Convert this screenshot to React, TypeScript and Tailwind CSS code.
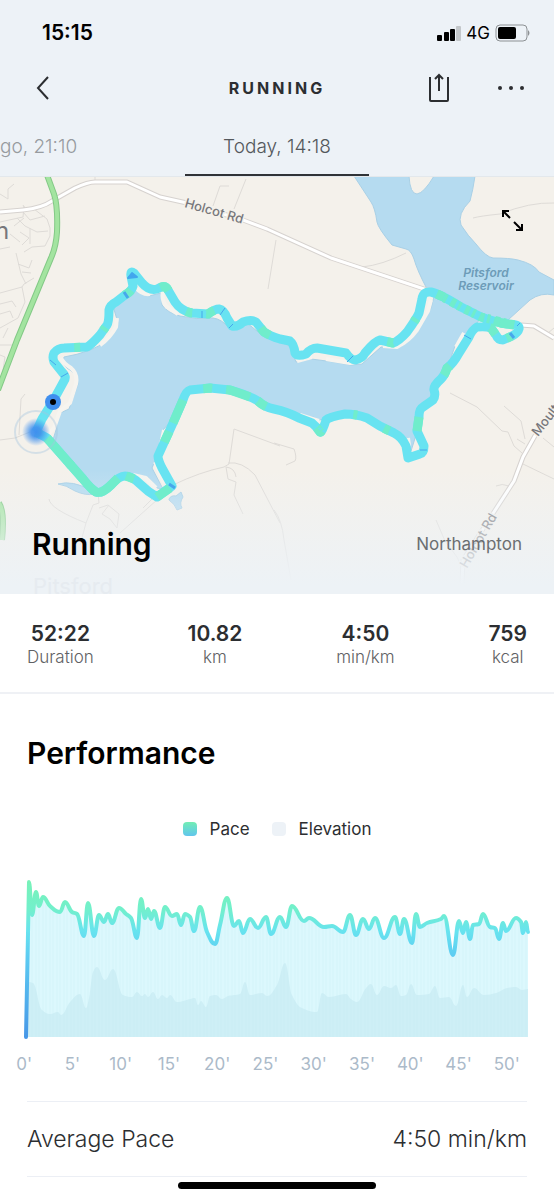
type Point = [number, number];

const stats = [
  { value: '52:22', label: 'Duration' },
  { value: '10.82', label: 'km' },
  { value: '4:50', label: 'min/km' },
  { value: '759', label: 'kcal' },
];

const minutes = [0, 5, 10, 15, 20, 25, 30, 35, 40, 45, 50];

const pace: Point[] = [
  [29, 882], [32, 915], [36, 892], [39, 906], [43, 897], [50, 906], [60, 912], [65, 902], [72, 912], [77, 914],
  [84, 936], [88, 903], [94, 936], [99, 915], [104, 922], [108, 914], [112, 923], [119, 908], [126, 914], [131, 918],
  [137, 938], [141, 899], [145, 918], [148, 909], [151, 919], [154, 911], [160, 928], [165, 907], [172, 916], [177, 914],
  [181, 925], [185, 914], [190, 917], [194, 931], [200, 907], [207, 932], [215, 944], [220, 925], [227, 898], [234, 926],
  [239, 921], [243, 933], [250, 919], [258, 928], [266, 917], [271, 934], [280, 917], [286, 927], [292, 906], [304, 921],
  [309, 918], [324, 927], [332, 926], [343, 932], [350, 915], [356, 935], [363, 919], [369, 929], [375, 918], [384, 938],
  [395, 917], [400, 934], [404, 919], [412, 943], [416, 914], [420, 927], [427, 923], [441, 919], [444, 916], [453, 955],
  [459, 921], [463, 933], [466, 922], [470, 939], [473, 925], [479, 924], [483, 914], [490, 927], [495, 928], [499, 939],
  [503, 923], [506, 931], [516, 918], [521, 922], [523, 933], [526, 922], [528, 932],
];

const elevation: Point[] = [
  [28, 982], [33, 983], [42, 1010], [50, 1014], [58, 1012], [61, 1015], [70, 1002], [80, 994], [86, 1008], [89, 998],
  [93, 972], [97, 967], [105, 980], [113, 969], [123, 995], [132, 997], [137, 992], [142, 996], [145, 994], [148, 997],
  [153, 992], [158, 999], [162, 995], [167, 998], [170, 995], [177, 1002], [190, 999], [195, 998], [198, 1005], [201, 1001],
  [206, 1007], [210, 996], [216, 995], [222, 999], [228, 996], [240, 994], [245, 982], [250, 995], [262, 993], [267, 996],
  [277, 985], [285, 963], [292, 995], [302, 1008], [317, 1012], [322, 993], [329, 997], [346, 994], [351, 999], [357, 1002],
  [366, 988], [371, 984], [377, 995], [384, 986], [391, 988], [396, 985], [401, 996], [406, 995], [411, 984], [417, 995],
  [429, 994], [435, 986], [440, 998], [449, 997], [456, 1006], [463, 985], [467, 997], [474, 988], [484, 995], [496, 993],
  [507, 988], [516, 987], [522, 990], [528, 989],
];

// Cubic curve through the points, flat at every peak and dip
function curve(points: Point[]) {
  const slopes = points.map(([x, y], i) => {
    if (i === 0 || i === points.length - 1) return 0;
    const left = (y - points[i - 1][1]) / (x - points[i - 1][0]);
    const right = (points[i + 1][1] - y) / (points[i + 1][0] - x);
    return left * right <= 0 ? 0 : (2 * left * right) / (left + right);
  });
  return points
    .map(([x, y], i) => {
      if (i === 0) return `${x} ${y}`;
      const [px, py] = points[i - 1];
      const d = (x - px) / 2.4;
      return `C${px + d} ${py + slopes[i - 1] * d} ${x - d} ${y - slopes[i] * d} ${x} ${y}`;
    })
    .join(' ');
}

const route =
  'M36 432 L42 419 L52 403 L64 381 Q67 377 62 372 L54 362 Q52 357 54 353 Q58 348 64 348 L87 347 Q91 345 100 335 L107 325 Q109 322 109 310 Q110 305 116 302 L125 295 Q132 291 133 286 L131 276 Q130 270 134 273 L142 283 Q149 291 157 289 Q165 284 168 290 L175 302 Q181 311 192 313 L208 314 Q215 309 219 309 Q224 310 227 318 L232 326 Q238 327 243 322 Q251 319 256 322 L264 332 Q270 336 280 339 L290 341 Q294 344 295 353 Q297 357 306 354 Q311 348 317 348 L346 353 Q351 360 355 360 Q362 359 365 353 Q375 341 380 340 L393 343 Q399 341 407 332 Q417 318 419 313 L422 299 Q423 291 431 292 Q440 294 461 307 L481 317 Q495 322 507 324 Q520 324 519 329 Q518 333 512 336 L503 340 Q498 340 496 335 L491 328 Q486 326 477 327 Q472 330 469 337 L459 353 Q453 364 447 368 Q445 375 441 379 Q433 386 434 390 Q436 396 433 400 L423 407 Q419 409 419 417 L417 431 L424 446 Q424 453 420 454 L408 458 Q407 452 406 446 Q402 437 394 433 Q380 427 367 418 Q356 414 345 414 Q329 417 326 420 Q322 433 320 432 Q317 427 312 423 L299 418 Q288 412 274 409 Q264 407 258 401 Q248 395 230 390 L210 388 L190 390 Q186 391 183 400 L173 423 L158 456 Q158 460 162 468 L172 486 L157 497 Q148 492 140 484 Q132 476 125 476 Q119 476 111 485 Q102 494 96 492 Q91 489 83 479 L47 438 L36 432';

const water = [
  'M137 287 Q142 295 149 296 L161 293 Q163 297 162 305 Q168 313 180 316 Q196 320 213 318 Q222 319 230 329 L247 323 L262 335 L290 346 L296 362 L311 359 Q330 361 351 365 L362 364 L381 347 L397 348 Q405 346 417 332 L431 308 L434 297 L427 289 Q417 270 414 259 Q411 250 406 249 L392 245 Q378 228 377 222 Q375 208 371 202 L354 176 L409 176 Q410 194 417 194 Q424 193 434 176 L475 176 Q473 190 470 201 Q457 214 461 225 Q468 236 476 244 Q486 257 493 258 Q510 258 518 260 Q534 264 539 272 L554 280 L554 295 Q541 292 530 300 L508 320 L481 318 L472 329 L456 343 L447 369 L434 389 L434 399 L419 409 L417 432 L411 451 L407 450 Q402 438 389 430 L367 417 L345 413 L326 418 L320 420 L313 417 L300 416 L274 408 L250 397 L230 390 L210 388 L190 390 L183 400 L173 419 L162 431 L162 443 L157 456 L152 468 L163 489 L157 488 L148 477 L131 474 L118 477 L103 491 L94 491 L52 443 L56 430 L58 414 L69 409 L78 384 Q78 374 67 368 Q62 363 64 357 Q77 355 90 350 Q108 344 118 323 L113 306 L125 297 Z',
  'M58 484 Q73 480 90 490 L94 494 Q86 496 75 491 Q66 485 58 484Z',
  'M169 499 Q171 495 176 496 L181 492 L183 497 Q179 503 182 508 L177 510 Q175 504 169 500Z',
];

// Strips of bare ground between the path and the water
const shore =
  'M136 288 Q142 295 150 294 M163 291 Q161 301 167 307 L178 314 M117 318 L116 327 Q110 338 100 345 M61 358 Q63 363 71 368 Q78 374 76 384 L70 403 L60 411 L54 428 L48 434 M297 361 L312 357 M326 359 L350 363 L362 361 M383 346 L397 347 Q409 341 417 330 L428 311 L431 300 M464 333 L456 347 M164 430 L161 445 M155 462 L164 483 M133 475 L146 478 L156 488 M300 415 L319 421 M408 438 L409 446';

const lanes =
  'M0 194 L8 199 L8 189 L14 184 M0 222 L23 217 L24 206 M23 205 L26 210 M23 212 L30 220 L45 216 M34 209 L47 219 L50 228 L50 236 L45 246 L32 247 L24 252 M14 226 L24 218 M17 218 L25 226 L37 232 L48 231 M20 232 L29 238 L22 245 M30 228 L30 244 M10 234 L20 242 M0 249 L10 247 M16 253 L21 274 L26 284 M18 264 L29 268 L32 260 M22 272 L31 273 M0 293 L22 287 L24 284 L34 278 M22 287 L25 302 L18 318 L0 328 M0 304 L12 301 L16 307 M0 314 L10 311 L13 318 M3 338 L8 328 M0 345 L12 345 M0 355 L5 357 L3 370 M213 206 L220 186 L229 186 M234 209 L246 179 M95 182 L95 177 M276 240 L268 289 M362 267 Q382 265 406 253 M473 218 Q480 216 500 214 Q530 202 554 203 M548 333 L554 328';

const farmLanes =
  'M25 394 L21 399 L19 435 M0 440 L15 438 L30 432 M173 485 Q200 472 224 467 L229 464 L234 429 L280 446 M226 467 L228 479 L236 482 L234 495 L243 514 M228 463 Q242 461 255 475 L280 523 M226 467 Q235 468 236 477 M49 499 Q50 509 86 523 L93 505 L99 503 L98 493 M86 523 L80 545 M99 508 L108 505 L119 514 L117 528 L110 519 L102 514 L109 505 M120 533 L158 499 M143 508 L152 499 M274 443 L294 449 Q297 457 295 461 L286 465 M274 510 Q282 520 284 540 L291 580 M450 393 L477 407 L502 431 L508 432 L514 446 L522 453 M504 406 L521 421 L525 439 M517 439 L525 444 M523 464 L554 479 M496 486 Q502 483 509 486 M543 438 L554 447 M436 520 L445 541 L457 557 L463 570';

const mainRoad = 'M0 212 L23 210 Q42 208 52 201 L75 188 Q88 182 95 182 L127 182 L160 197 L187 203 L243 220 L267 229 L331 258 L427 290 M521 325 L534 326 L554 338';
const southRoad = 'M536 434 L523 457 L514 481 L492 515 L463 560 L462 584';
const trunkRoad = 'M47 175 L54 194 Q58 206 57 232 Q56 247 51 258 L17 340 L-2 390 M-1 503 Q5 512 2 540';

function RouteMap() {
  return (
    <svg viewBox="0 177 554 417" className="block w-full" role="img" aria-label="Route around Pitsford Reservoir">
      <defs>
        <linearGradient id="fade" x1="0" y1="470" x2="0" y2="585" gradientUnits="userSpaceOnUse">
          <stop offset="0" stopColor="#edf2f6" stopOpacity="0" />
          <stop offset="1" stopColor="#edf2f6" />
        </linearGradient>
        <radialGradient id="start">
          <stop offset="0" stopColor="#3f90ee" />
          <stop offset="0.35" stopColor="#3f90ee" stopOpacity="0.9" />
          <stop offset="1" stopColor="#3f90ee" stopOpacity="0" />
        </radialGradient>
      </defs>
      <rect y="177" width="554" height="417" fill="#f4f1eb" />
      <g fill="none" stroke="#dedbd7">
        <path d={lanes} />
        <path d={farmLanes} />
      </g>
      <g fill="#b5dbf0" stroke="#a9d0e6" strokeWidth="1">
        {water.map((d) => (
          <path key={d} d={d} />
        ))}
      </g>
      <g fill="none" strokeLinejoin="round">
        <path d={shore} stroke="#f6f4ef" strokeWidth="4" />
        <path d={mainRoad} stroke="#d6d2cf" strokeWidth="5" />
        <path d={mainRoad} stroke="#fff" strokeWidth="3" />
        <path d={southRoad} stroke="#d6d2cf" strokeWidth="5" />
        <path d={southRoad} stroke="#fff" strokeWidth="3" />
        <path d={trunkRoad} stroke="#83c986" strokeWidth="6" />
        <path d={trunkRoad} stroke="#a3e4a0" strokeWidth="4" />
      </g>
      <g className="font-['Inter',sans-serif]" fill="#77777b" stroke="#f4f1eb" strokeWidth="3" paintOrder="stroke" fontWeight="500">
        <text transform="translate(184 207) rotate(16)" fontSize="13">Holcot Rd</text>
        <text transform="translate(538 437) rotate(-52)" fontSize="13">Moult</text>
        <text transform="translate(467 569) rotate(-60)" fontSize="13">Holcot Rd</text>
        <text x="-5" y="239" fontSize="24" fontWeight="400">n</text>
      </g>
      <g className="font-['Inter',sans-serif]" fill="#6d9cb8" fontSize="12" fontStyle="italic" fontWeight="600" textAnchor="middle">
        <text x="486" y="277">Pitsford</text>
        <text x="486" y="290">Reservoir</text>
      </g>
      <rect y="450" width="554" height="144" fill="url(#fade)" />
      <text x="33" y="594" fontSize="22" fill="#e6ebf0" className="font-['Inter',sans-serif]">Pitsford</text>
      <g fill="none" strokeLinejoin="round">
        <path d={route} stroke="#68e3f1" strokeWidth="9" />
        <path d={route} stroke="#70edcb" strokeWidth="9" strokeDasharray="0 112 6 30 4 40 8 55 10 28 6 14 9 60 12 28" />
        <path d="M437 294 L461 307 L481 317 L514 325" stroke="#70edcb" strokeWidth="9" strokeDasharray="5 3 3 5" />
        <path d="M47 438 L83 479 Q91 489 96 492 Q102 494 111 485 L118 478 M126 476 L134 479 M157 497 L170 488 M183 400 L173 423 M230 390 L250 397 M419 417 L417 431 M500 323 L514 325" stroke="#70edcb" strokeWidth="9" />
        <path d="M50 360 L56 365 M61 377 L68 373 M202 311 L202 318 M220 315 L225 308 M229 328 L233 324 M347 362 L353 356 M464 335 L471 339 M517 326 L520 323 M420 450 L427 450" stroke="#47a7ec" />
        <path d="M124 292 L128 298 M510 333 L514 338 M169 484 L175 488" stroke="#47a7ec" strokeWidth="3" />
        <path d="M128 278 L132 273 L137 277 Z" fill="#42a7ed" stroke="#42a7ed" strokeWidth="2" />
      </g>
      <circle cx="36" cy="432" r="21" fill="none" stroke="#a5c5de" strokeOpacity="0.4" strokeWidth="2" />
      <circle cx="36" cy="432" r="14" fill="url(#start)" />
      <circle cx="53" cy="402" r="8" fill="#3f8fee" />
      <circle cx="53" cy="402" r="3" />
    </svg>
  );
}

function PaceChart() {
  const line = curve(pace);
  return (
    <svg viewBox="0 870 554 172" className="block w-full" role="img" aria-label="Pace and elevation over time">
      <defs>
        <linearGradient id="pace" x1="0" y1="880" x2="0" y2="1040" gradientUnits="userSpaceOnUse">
          <stop offset="0" stopColor="#78f2b8" />
          <stop offset="0.18" stopColor="#72f0cb" />
          <stop offset="0.32" stopColor="#67e3ef" />
          <stop offset="0.48" stopColor="#5ccbf2" />
          <stop offset="1" stopColor="#4695e6" />
        </linearGradient>
        <pattern id="bars" width="7" height="10" patternUnits="userSpaceOnUse">
          <path d="M1 0V10M4 0V10" stroke="#bfe9f1" strokeOpacity="0.25" />
        </pattern>
      </defs>
      <path d={`M28 1037 L${line} V1037 Z`} fill="#dcf8fd" />
      <path d={`M28 1037 L${curve(elevation)} V1037 Z`} fill="#ceeff6" />
      <path d={`M28 1037 L${line} V1037 Z`} fill="url(#bars)" />
      <path d={`M26 1037 L${line}`} fill="none" stroke="url(#pace)" strokeWidth="4" strokeLinejoin="round" strokeLinecap="round" />
    </svg>
  );
}

export default function App() {
  return (
    <div className="min-h-screen bg-white font-['Inter',sans-serif] text-[#2c2e31]">
      <header className="border-b border-[#e3e8ec] bg-[#edf2f7]">
        <div className="flex h-[66px] items-center justify-between pl-[42px] pr-[23px] text-black">
          <span className="text-[21px] font-semibold leading-7">15:15</span>
          <div className="flex items-center gap-[5px]">
            <svg viewBox="0 0 26 17" className="h-[17px] w-[26px]" aria-hidden="true">
              <rect x="2" y="10" width="5" height="6" rx="1" />
              <rect x="9" y="7" width="5" height="9" rx="1" />
              <rect x="15" y="4" width="5" height="12" rx="1" />
              <rect x="21" y="1" width="5" height="15" rx="1" fill="#c3c7ca" />
            </svg>
            <span className="text-[17px] leading-5">4G</span>
            <svg viewBox="0 0 36 18" className="h-[18px] w-9" aria-hidden="true">
              <rect x="1" y="1" width="31" height="16" rx="4" fill="none" stroke="#8d9194" />
              <rect x="3" y="3" width="18" height="12" rx="2" />
              <path d="M33 6Q36 9 33 12Z" fill="#8d9194" />
            </svg>
          </div>
        </div>

        <nav className="grid h-11 grid-cols-3 items-center px-[25px]">
          <button type="button" aria-label="Back" className="flex size-9 items-center justify-center">
            <svg viewBox="0 0 14 24" className="h-6 w-[14px]" fill="none" stroke="currentColor" strokeWidth="2">
              <path d="M12 1 L2 12 L12 23" />
            </svg>
          </button>
          <h1 className="text-center text-base font-bold tracking-[3px]">RUNNING</h1>
          <div className="flex items-center justify-end gap-9">
            <button type="button" aria-label="Share" className="flex size-9 items-center justify-center">
              <svg viewBox="0 0 22 30" className="h-[30px] w-[22px]" fill="none" stroke="currentColor" strokeWidth="2">
                <path d="M2 4V27Q2 28 3 28H19Q20 28 20 27V4" />
                <path d="M11 18V2M7 6L11 2L15 6" />
              </svg>
            </button>
            <button type="button" aria-label="More" className="flex size-9 items-center justify-center">
              <svg viewBox="0 0 26 6" className="h-[6px] w-[26px]" fill="currentColor">
                <circle cx="2" cy="3" r="2" />
                <circle cx="13" cy="3" r="2" />
                <circle cx="24" cy="3" r="2" />
              </svg>
            </button>
          </div>
        </nav>

        <div className="grid h-[66px] grid-cols-3 text-[19px] font-light">
          <button type="button" className="pt-2 text-left text-[#979b9f]">go, 21:10</button>
          <button type="button" className="border-b-2 border-[#303337] pt-[10px] text-[#54585c]">Today, 14:18</button>
        </div>
      </header>

      <main>
        <section className="relative">
          <RouteMap />
          <button type="button" aria-label="Expand map" className="absolute right-6 top-[25px] flex size-9 items-center justify-center text-black">
            <svg viewBox="0 0 24 24" className="size-6" fill="none" stroke="currentColor" strokeWidth="2">
              <path d="M10 10L3 3M3 9V3H9" />
              <path d="M14 14L22 22M16 22H22V16" />
            </svg>
          </button>
          <div className="absolute inset-x-0 bottom-8 flex items-center justify-between px-8">
            <h2 className="text-[30px] font-semibold leading-9 text-black">Running</h2>
            <p className="text-[17px] leading-6 text-[#6b6e71]">Northampton</p>
          </div>
        </section>

        <dl className="flex justify-between border-b-2 border-[#eff1f5] px-[27px] pb-[26px] pt-[26px] text-center">
          {stats.map((stat) => (
            <div key={stat.label} className="flex flex-col-reverse">
              <dt className="text-[17px] font-light leading-[18px] text-[#5f6164]">{stat.label}</dt>
              <dd className="text-[21px] font-semibold leading-7">{stat.value}</dd>
            </div>
          ))}
        </dl>

        <section>
          <h2 className="px-[27px] pt-[39px] text-[30px] font-semibold leading-10 text-black">Performance</h2>
          <div className="flex items-center justify-center gap-[22px] pt-11 text-[17px] leading-6">
            <span className="flex items-center gap-[13px]">
              <i className="size-[14px] rounded bg-linear-to-b from-[#72edb3] to-[#62c5ec]" />
              Pace
            </span>
            <span className="flex items-center gap-[13px]">
              <i className="size-[14px] rounded bg-[#edf2f7]" />
              Elevation
            </span>
          </div>
          <div className="pt-[29px]">
            <PaceChart />
            <div className="grid grid-cols-11 pr-[23px] pt-[10px] text-center text-[17px] leading-6 text-[#abbac9]">
              {minutes.map((minute) => (
                <span key={minute}>{minute}'</span>
              ))}
            </div>
          </div>
          <dl className="mx-[27px] mt-[25px] flex h-[76px] items-center justify-between border-y border-[#eceff5] text-[23px] font-light">
            <dt>Average Pace</dt>
            <dd>4:50 min/km</dd>
          </dl>
        </section>
      </main>

      <div className="mx-auto mt-[5px] h-[7px] w-[198px] rounded-full bg-black" />
    </div>
  );
}
